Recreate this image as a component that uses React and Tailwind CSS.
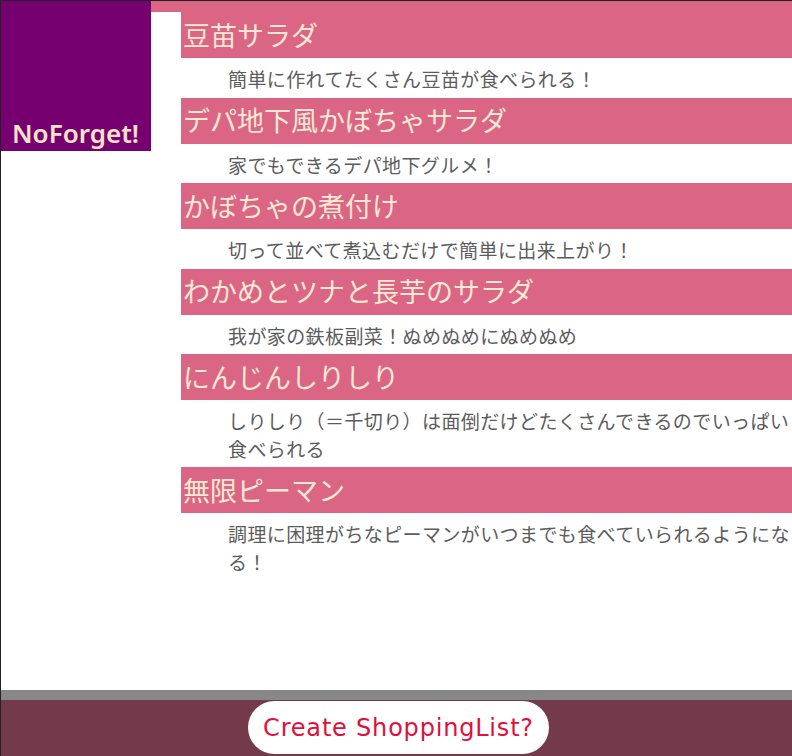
import React from "react";

const items = [
  ["豆苗サラダ", "簡単に作れてたくさん豆苗が食べられる！"],
  ["デパ地下風かぼちゃサラダ", "家でもできるデパ地下グルメ！"],
  ["かぼちゃの煮付け", "切って並べて煮込むだけで簡単に出来上がり！"],
  ["わかめとツナと長芋のサラダ", "我が家の鉄板副菜！ぬめぬめにぬめぬめ"],
  ["にんじんしりしり", "しりしり（＝千切り）は面倒だけどたくさんできるのでいっぱい食べられる"],
  ["無限ピーマン", "調理に困理がちなピーマンがいつまでも食べていられるようになる！"],
];

export default function App() {
  return (
    <div className="relative h-[756px] w-[792px] overflow-hidden bg-white border-t border-l border-[#222]" style={{ fontFamily: '"Noto Sans CJK JP", "Noto Sans", sans-serif' }}>
      <div className="flex">
        <div className="w-[150px] h-[150px] shrink-0 bg-[#770070] flex items-end pl-[11px] pb-[3px]">
          <span className="text-[26px] leading-[30px] text-[#f8e2c8] font-semibold" style={{ fontFamily: '"Noto Sans", sans-serif' }}>NoForget!</span>
        </div>
        <div className="flex-1 flex flex-col">
          <div className="h-[11px] bg-[#da6584]" />
          <div className="ml-[30px] flex flex-col">
            {items.map(([t, d]) => (
              <div key={t} className="flex flex-col">
                <div className="h-[46px] bg-[#da6584] flex items-center pl-[2px] text-[27px] text-[#fde9d3] whitespace-nowrap">{t}</div>
                <div className="pl-[47px] pt-[7px] pb-[5px] text-[19px] leading-[27.5px] tracking-[0.4px] text-[#5c5c5c]">{d}</div>
              </div>
            ))}
          </div>
        </div>
      </div>
      <div className="absolute left-0 right-0 bottom-0 h-[66px] border-t-[10px] border-[#888] bg-[#733a4b] flex justify-center pt-[1px]">
        <div className="ml-[4px] w-[301px] h-[53px] rounded-full bg-white flex items-center justify-center text-[24px] tracking-[0.8px] text-[#e0103a]" style={{ fontFamily: '"DejaVu Sans", sans-serif' }}>
          Create ShoppingList?
        </div>
      </div>
    </div>
  );
}
